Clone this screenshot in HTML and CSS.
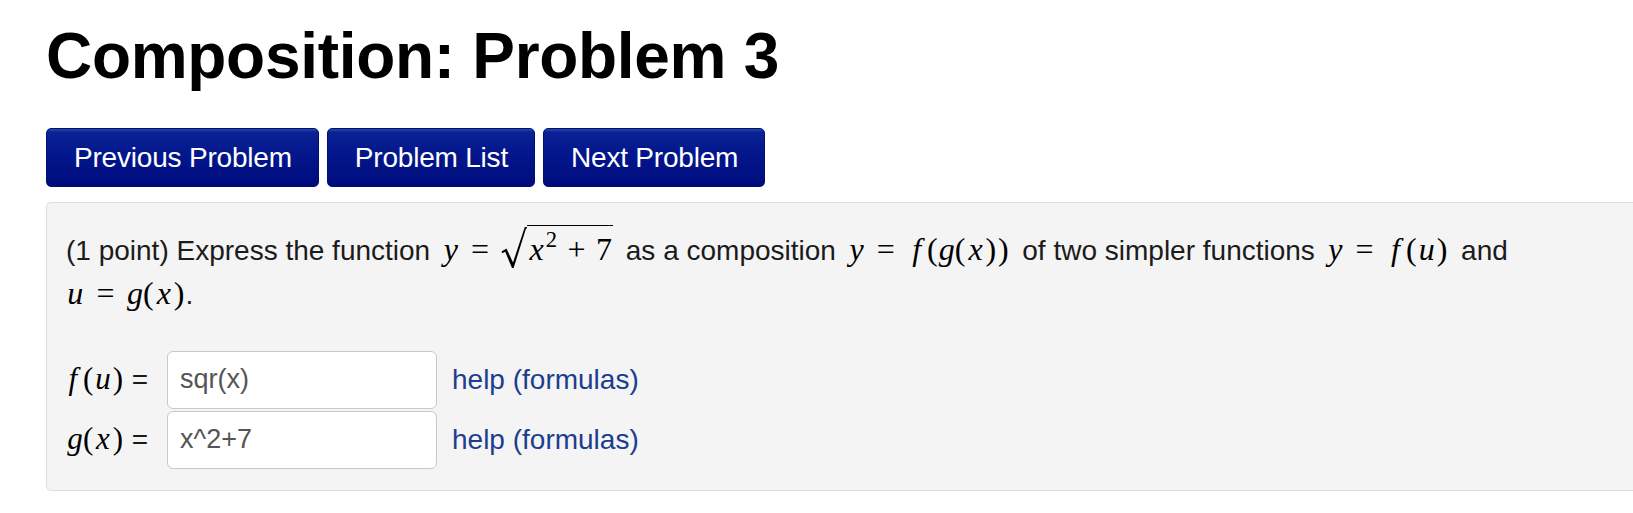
FILE: index.html
```html
<!DOCTYPE html>
<html>
<head>
<meta charset="utf-8">
<title>Composition: Problem 3</title>
<link rel="stylesheet" href="styles.css">
</head>
<body>
<h1 class="title">Composition: Problem 3</h1>
<div class="nav">
  <a class="btn" href="#">Previous Problem</a>
  <a class="btn" href="#">Problem List</a>
  <a class="btn" href="#">Next Problem</a>
</div>
<div class="panel">
  <p class="statement">(1 point) Express the function <span class="m inl"><span class="g gy">y</span><span class="g rel">=</span><span class="sqrt"><svg class="rad" width="26" height="41" viewBox="0 0 26 41"><path d="M0.5 24.5 L5.5 21.5 L12 35.5 L23.8 0 L26 0 L26 1.6 L25 1.6 L12.6 41 L11 41 L4.2 24.8 L1.2 26.2 Z" fill="#000"/></svg><span class="radicand"><span class="g gx">x</span><span class="g sup">2</span><span class="g bin">+</span><span class="g dg">7</span></span></span></span> as a composition <span class="m inl"><span class="g gy">y</span><span class="g rel">=</span><span class="g gf">f</span><span class="g pr">(</span><span class="g gg">g</span><span class="g pr">(</span><span class="g gx">x</span><span class="g pr">)</span><span class="g pr">)</span></span> of two simpler functions <span class="m inl"><span class="g gy">y</span><span class="g rel">=</span><span class="g gf">f</span><span class="g pr">(</span><span class="g gu">u</span><span class="g pr">)</span></span> and<br><span class="m"><span class="g gu">u</span><span class="g rel">=</span><span class="g gg">g</span><span class="g pr">(</span><span class="g gx">x</span><span class="g pr">)</span></span>.</p>
  <div class="answers">
    <label class="lbl"><span class="m"><span class="g gf">f</span><span class="g pr">(</span><span class="g gu">u</span><span class="g pr">)</span></span> =</label>
    <input class="field" type="text" value="sqr(x)">
    <a class="help" href="#">help (formulas)</a>
    <label class="lbl"><span class="m"><span class="g gg">g</span><span class="g pr">(</span><span class="g gx">x</span><span class="g pr">)</span></span> =</label>
    <input class="field" type="text" value="x^2+7">
    <a class="help" href="#">help (formulas)</a>
  </div>
</div>
</body>
</html>
```
FILE: styles.css
```css
html, body {
  margin: 0;
  padding: 0;
  background: #fff;
  overflow: hidden;
}
body {
  padding-left: 46px;
  font-family: "Liberation Sans", Arial, sans-serif;
  color: #1b1b1b;
}
.title {
  margin: 19px 0 35px 0;
  font-size: 64px;
  line-height: 74px;
  font-weight: bold;
  color: #000;
  letter-spacing: -0.3px;
}
.nav {
  display: flex;
  gap: 8px;
  margin-bottom: 15px;
}
.btn {
  display: flex;
  align-items: center;
  height: 59px;
  box-sizing: border-box;
  padding: 0 26px 0 27px;
  font-size: 28px;
  color: #fff;
  text-decoration: none;
  border: 1px solid #02106e;
  border-radius: 5px;
  background: linear-gradient(#2a4aa8 0px, #0b2296 3px, #03168c 45%, #000c7d 100%);
  letter-spacing: -0.2px;
}
.panel {
  background: #f4f4f4;
  border: 1px solid #dedede;
  border-right: 0;
  border-radius: 5px 0 0 5px;
  padding: 22px 0 21px 19px;
}
.statement {
  margin: 0 0 34px 0;
  font-size: 28px;
  line-height: 44px;
  color: #1b1b1b;
}
.m {
  font-family: "Liberation Serif", "Times New Roman", serif;
  font-size: 32px;
  line-height: 32px;
  color: #000;
  white-space: nowrap;
}
.m.inl {
  margin: 0 5px;
}
.g {
  display: inline-block;
  text-align: center;
}
.gf { width: 0.6em; font-style: italic; }
.gg { width: 0.477em; font-style: italic; }
.gu { width: 0.572em; font-style: italic; }
.gx { width: 0.572em; font-style: italic; }
.gy { width: 0.49em; font-style: italic; }
.pr { width: 0.389em; }
.dg { width: 0.5em; }
.rel {
  width: 0.778em;
  margin: 0 0.278em;
}
.bin {
  width: 0.778em;
  margin: 0 0.222em;
}
.sup {
  width: 0.5em;
  font-size: 0.707em;
  line-height: 0.8em;
  vertical-align: 0.58em;
  text-align: left;
}
.sqrt {
  display: inline-block;
  white-space: nowrap;
}
.rad {
  vertical-align: -8px;
}
.radicand {
  display: inline-block;
  line-height: 32px;
  border-top: 1.6px solid #000;
  padding: 4.5px 1px 0 0;
}
.answers {
  display: grid;
  grid-template-columns: 101px 270px auto;
  row-gap: 2px;
  align-items: center;
}
.lbl {
  font-size: 28px;
  color: #1b1b1b;
  justify-self: end;
  padding-right: 19px;
  white-space: nowrap;
}
.lbl .m {
  font-size: 31px;
}
.field {
  box-sizing: border-box;
  width: 270px;
  height: 58px;
  margin: 0;
  padding: 0 12px;
  border: 1.5px solid #c9c9c9;
  border-radius: 6px;
  background: #fff;
  font-family: "Liberation Sans", Arial, sans-serif;
  font-size: 27px;
  color: #555;
  outline: none;
}
.help {
  margin-left: 15px;
  font-size: 28px;
  color: #1d3d8e;
  text-decoration: none;
  justify-self: start;
}
```
